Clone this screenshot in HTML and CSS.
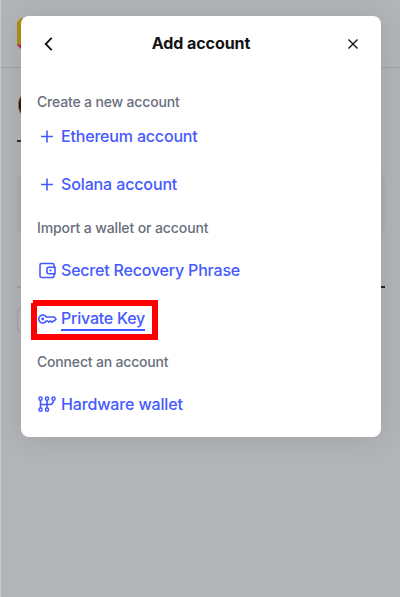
FILE: index.html
```html
<!DOCTYPE html>
<html lang="en">
<head>
<meta charset="utf-8">
<title>Add account</title>
<link rel="stylesheet" href="styles.css">
</head>
<body>
<div class="page" aria-hidden="true">
  <div class="topbar"><div class="network"></div></div>
  <div class="amount"></div>
  <div class="change"></div>
  <div class="actions"></div>
  <div class="tabs"></div>
  <div class="filter"></div>
</div>
<main class="modal">
  <header class="header">
    <svg class="back" viewBox="0 0 16 16"><path d="M10.700 1.800 4.700 8l6 6.200"/></svg>
    <h1>Add account</h1>
    <svg class="close" viewBox="0 0 16 16"><path d="m3.500 3.500 9 9m0-9-9 9"/></svg>
  </header>
  <h2 class="label l-create">Create a new account</h2>
  <a class="option"><svg class="icon" viewBox="0 0 20 20"><path d="M10 4.500v12M4 10.500h12"/></svg><span class="t-eth">Ethereum account</span></a>
  <a class="option"><svg class="icon" viewBox="0 0 20 20"><path d="M10 4.500v12M4 10.500h12"/></svg><span class="t-sol">Solana account</span></a>
  <h2 class="label l-import">Import a wallet or account</h2>
  <a class="option"><svg class="icon" viewBox="0 0 20 20"><path d="M17 7V5a1.500 1.500 0 0 0-1.500-1.500h-11A1.500 1.500 0 0 0 3 5v11a1.500 1.500 0 0 0 1.500 1.500h11A1.500 1.500 0 0 0 17 16v-2M18 7.200h-6.500a1.500 1.500 0 0 0-1.500 1.500v3.600a1.500 1.500 0 0 0 1.500 1.500H18z"/><circle class="dot" cx="13.500" cy="10.500" r="1.100"/></svg><span class="t-srp">Secret Recovery Phrase</span></a>
  <a class="option private"><svg class="icon" viewBox="0 0 20 20"><path d="M9.200 9a4 4 0 1 0 0 4h1.300l1.300 1.200 1.500-1.200 1.500 1.200 1.500-1.200h1l1.700-1.800-1.700-2.200z"/><circle class="dot" cx="5.700" cy="11" r="1.400"/></svg><span class="t-key">Private Key</span>
    <svg class="marker" viewBox="0 0 127 40"><path d="M2 0h125v40H0V3h2zM6 6v28h115V6z" fill-rule="evenodd"/></svg>
  </a>
  <h2 class="label l-connect">Connect an account</h2>
  <a class="option"><svg class="icon" viewBox="0 0 20 20"><path d="M3.500 6v8.500M10 6v8.500M3.500 10.500h9q4 0 4-4.500"/><circle class="node" cx="3.500" cy="4.700" r="1.600"/><circle class="node" cx="10" cy="4.700" r="1.600"/><circle class="node" cx="16.500" cy="4.700" r="1.600"/><circle class="node" cx="3.500" cy="15.700" r="1.600"/><circle class="node" cx="10" cy="15.700" r="1.600"/></svg><span class="t-hw">Hardware wallet</span></a>
</main>
</body>
</html>
```
FILE: styles.css
```css
* { box-sizing: border-box; }
body {
  margin: 0;
  width: 400px;
  height: 597px;
  position: relative;
  overflow: hidden;
  background: #b2b4b8;
  font-family: Inter, "Liberation Sans", sans-serif;
}
.page { height: 597px; border-left: 1px solid #c6cac9; }
.topbar { height: 68px; padding: 18px 0 0 16px; border-bottom: 1px solid #9fa1a6; }
.network {
  width: 30px;
  height: 31px;
  background: linear-gradient(#b18e16 0 26px, #bd2350 27px);
  clip-path: polygon(4px 0, 100% 0, 100% 100%, 4px 100%, 0 27px, 0 4px);
}
.amount { width: 24px; height: 28px; margin: 23px 0 0 17px; border-radius: 50%; background: #1d1c1e; border-left: 1px solid #9b6b35; }
.change { width: 10px; height: 2px; margin: 21px 0 0 16px; background: #3b2b1b; }
.actions { width: 368px; height: 62px; margin: 31px 0 0 16px; border-radius: 8px; background: #abadb2; }
.tabs { width: 368px; height: 2px; margin: 51px 0 0 16px; background: linear-gradient(90deg, #9c9ea3 50%, #25262a 50%); }
.filter { width: 60px; height: 31px; margin: 17px 0 0 16px; border: 1px solid #9c9ea3; border-radius: 9px; }
.modal {
  position: absolute;
  left: 21px;
  top: 16px;
  width: 360px;
  height: 421px;
  padding: 16px;
  border-radius: 8px;
  background: #fff;
  box-shadow: 0 2px 30px rgba(0, 0, 0, .10);
}
.header { display: flex; align-items: center; justify-content: space-between; height: 24px; padding: 0 4px; }
.header svg { width: 16px; height: 16px; fill: none; stroke: #121314; stroke-width: 1.8; }
.header .close { stroke-width: 1.400; }
h1 { margin: -2px 0 0; font-size: 16px; line-height: 24px; font-weight: 700; letter-spacing: -.05px; color: #121314; white-space: nowrap; }
.label { margin: 0; height: 22px; font-size: 14px; line-height: 22px; font-weight: 500; color: #686e7d; white-space: nowrap; }
.l-create { margin: 35px 0 -1px; letter-spacing: -.17px; }
.l-import { margin: 9px 0 7px; letter-spacing: -.11px; }
.l-connect { margin: 9px 0 7px; letter-spacing: -.18px; }
.option {
  position: relative;
  display: flex;
  align-items: center;
  height: 48px;
  color: #4459ff;
  font-size: 16px;
  line-height: 24px;
  font-weight: 500;
  white-space: nowrap;
}
.icon { width: 20px; height: 20px; margin-right: 4px; fill: none; stroke: currentColor; stroke-width: 1.600; }
.icon .dot { fill: currentColor; stroke: none; }
.icon .node { fill: #fff; stroke-width: 1.500; }
.t-eth { letter-spacing: -.18px; }
.t-sol { letter-spacing: -.13px; }
.t-srp { letter-spacing: -.2px; }
.t-key { letter-spacing: -.22px; box-shadow: 0 2px 0 #4459ff; height: 22px; line-height: 22px; }
.t-hw { letter-spacing: -.14px; }
.marker { position: absolute; left: -6px; top: 6px; width: 127px; height: 40px; fill: #f00; }
```
